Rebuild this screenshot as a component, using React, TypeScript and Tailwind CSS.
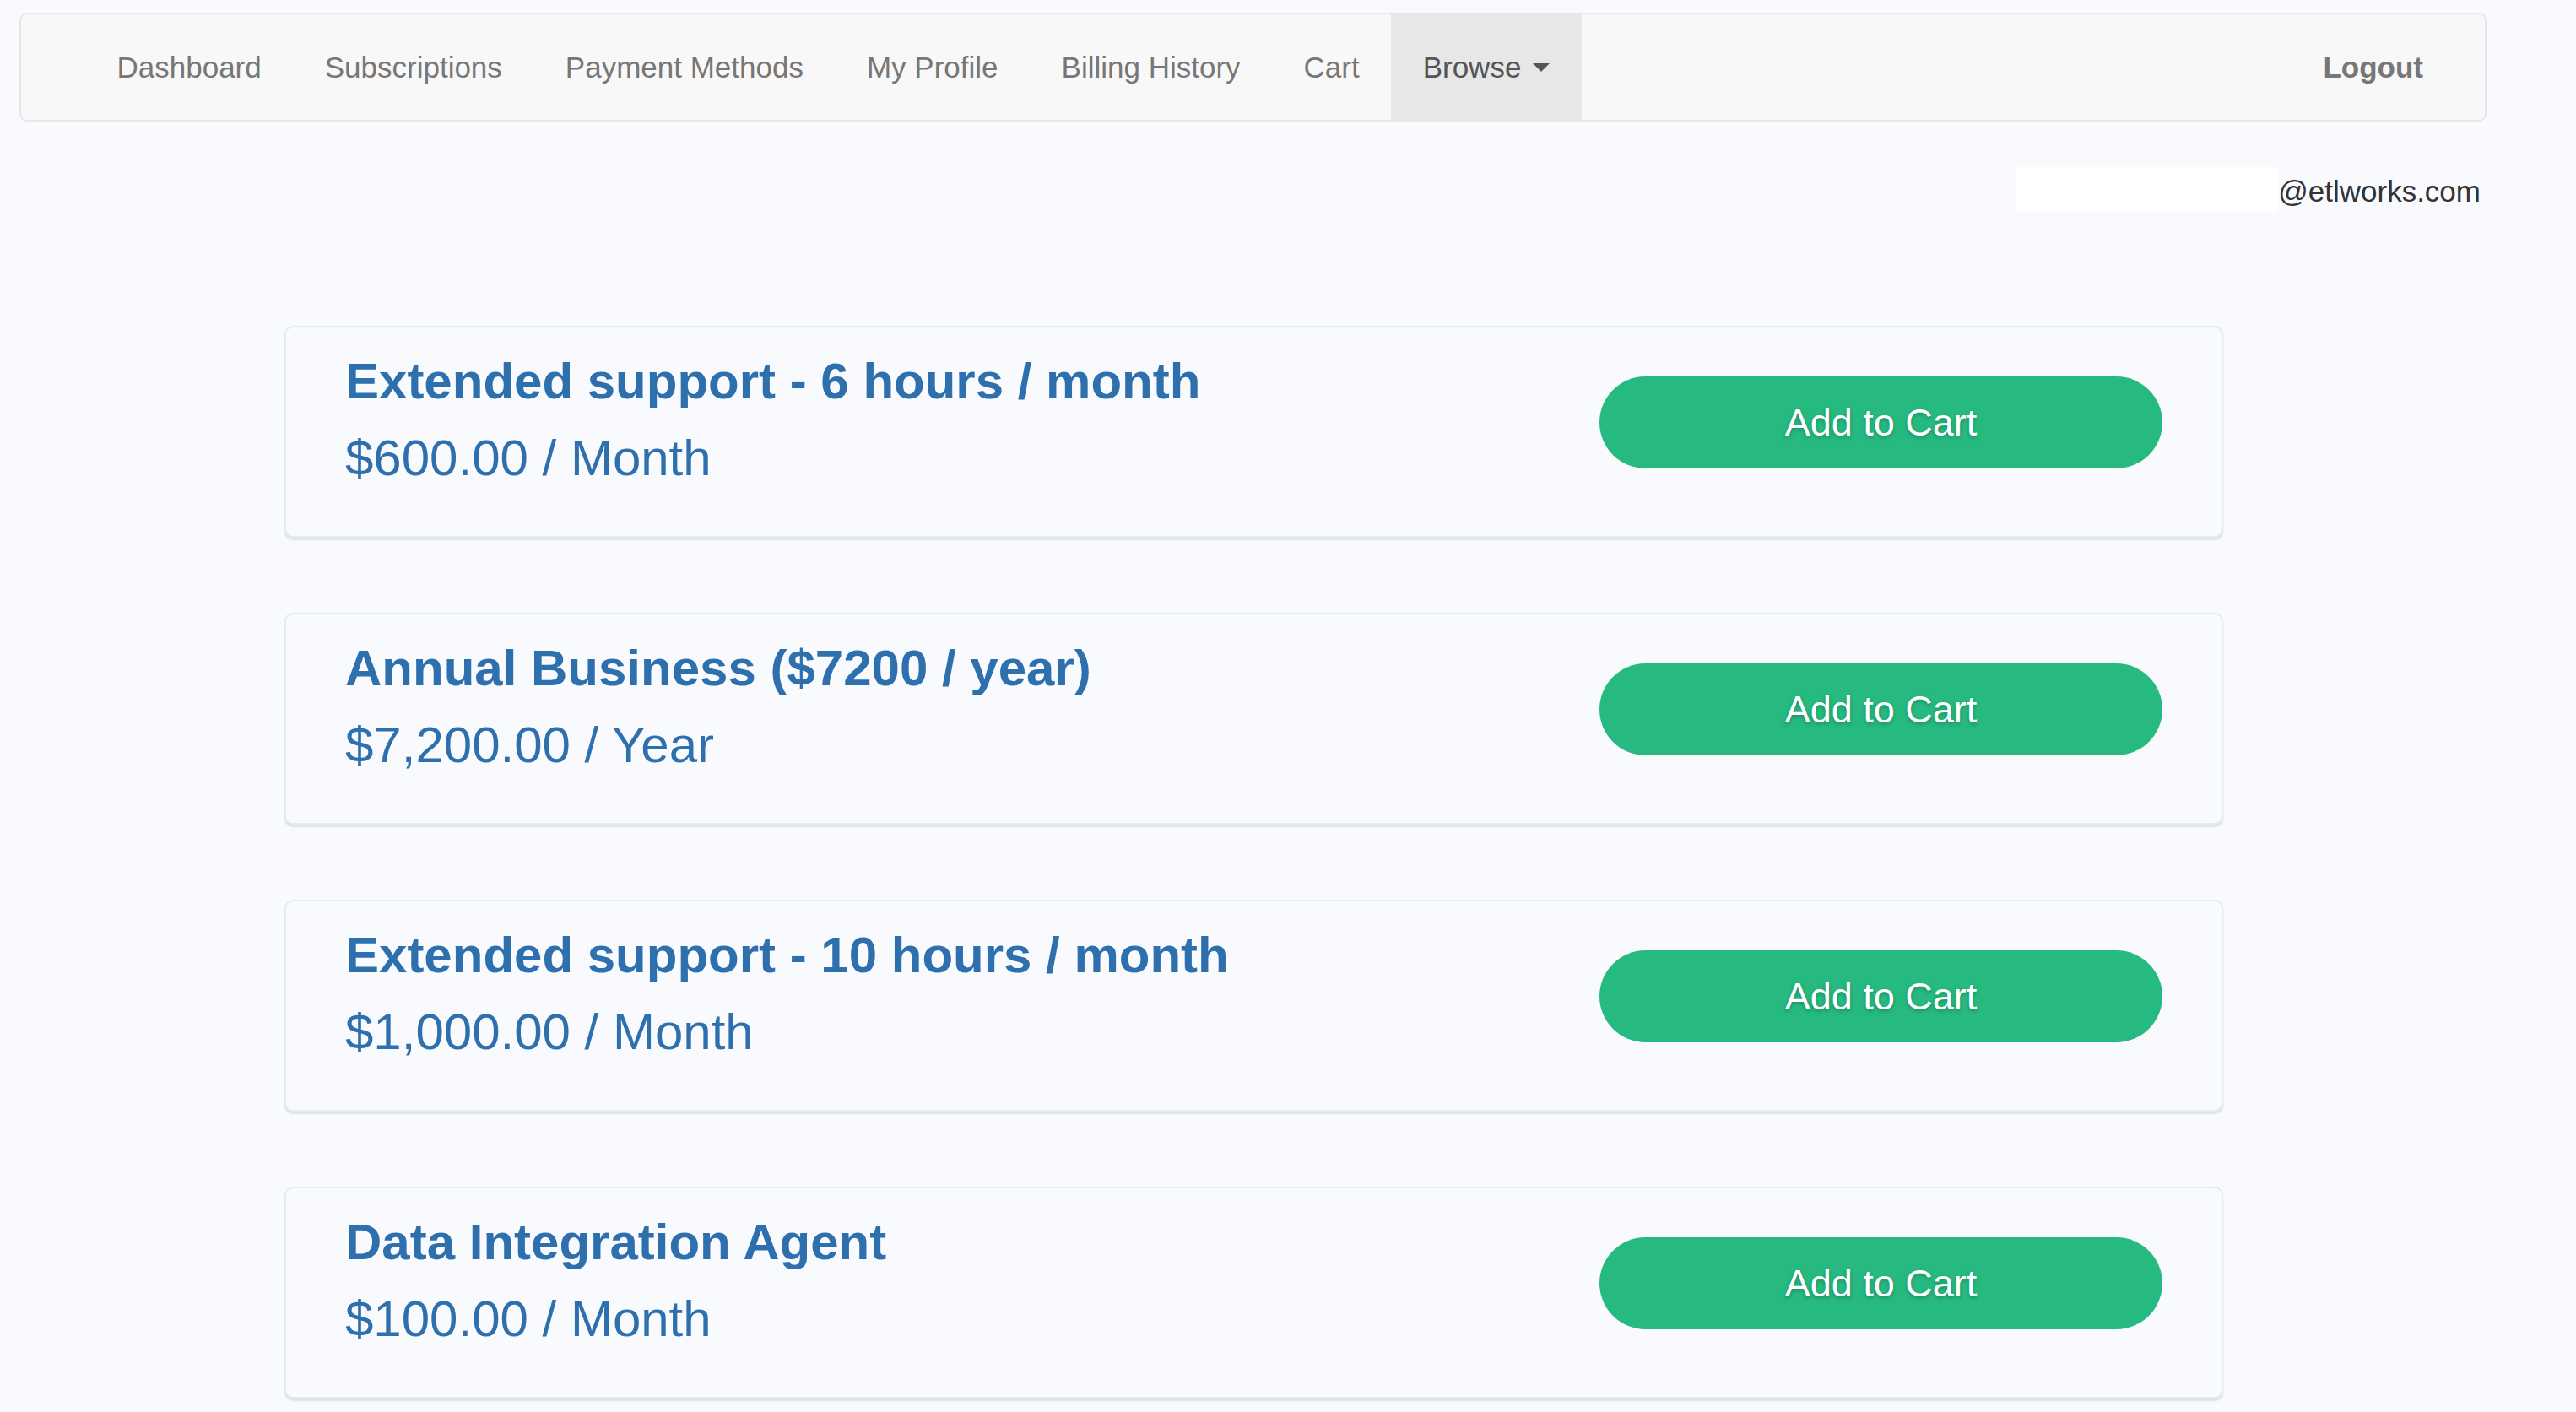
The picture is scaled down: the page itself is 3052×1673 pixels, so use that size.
import React from "react";

const navItems = ["Dashboard", "Subscriptions", "Payment Methods", "My Profile", "Billing History", "Cart"];

const products = [
  { title: "Extended support - 6 hours / month", price: "$600.00 / Month" },
  { title: "Annual Business ($7200 / year)", price: "$7,200.00 / Year" },
  { title: "Extended support - 10 hours / month", price: "$1,000.00 / Month" },
  { title: "Data Integration Agent", price: "$100.00 / Month" },
];

export default function App() {
  return (
    <div
      className="min-h-[1673px] w-full bg-[#f8fafd] pt-[15px]"
      style={{ fontFamily: '"Liberation Sans", Arial, sans-serif' }}
    >
      <div className="ml-[23px] w-[2923px]">
        <nav className="flex h-[129px] items-stretch justify-between rounded-[9px] border-2 border-[#e7e7e7] bg-[#f8f8f8]">
          <ul className="ml-[76px] flex items-stretch">
            {navItems.map((item) => (
              <li key={item} className="flex items-center px-[37.5px] text-[35px] leading-[50px] text-[#777]">
                {item}
              </li>
            ))}
            <li className="flex items-center bg-[#e7e7e7] px-[37.5px] text-[35px] leading-[50px] text-[#555]">
              Browse{" "}
              <span className="ml-[14px] inline-block h-0 w-0 border-l-[10px] border-r-[10px] border-t-[10px] border-l-transparent border-r-transparent border-t-[#555]" />
            </li>
          </ul>
          <div className="mr-[73px] flex items-center text-[35px] font-bold leading-[50px] text-[#777]">
            Logout
          </div>
        </nav>
        <div className="mt-[54px] flex justify-end pr-[7px]">
          <div className="h-[53px] w-[310px] bg-white" />
          <span className="mt-[4px] text-[35px] leading-[50px] text-[#333]">@etlworks.com</span>
        </div>
      </div>

      <div className="ml-[337px] mt-[134px] flex w-[2297px] flex-col gap-[89px]">
        {products.map((p) => (
          <div
            key={p.title}
            className="flex h-[251px] items-start justify-between rounded-[10px] border-2 border-[#e6ebf1] bg-[#f8fafd] px-[70px] shadow-[0_3px_2px_rgba(170,180,195,0.35)]"
          >
            <div className="pt-[31px]">
              <div className="text-[60px] font-bold leading-[66px] text-[#2e6fae]">{p.title}</div>
              <div className="mt-[25px] text-[60px] leading-[66px] text-[#2e6fae]">{p.price}</div>
            </div>
            <button
              className="mt-[58px] flex h-[109px] w-[667px] items-center justify-center rounded-full bg-[#26b980] text-[45px] leading-none text-white [text-shadow:0_2px_4px_rgba(0,0,0,0.25)]"
              style={{ fontFamily: '"Liberation Sans", Arial, sans-serif' }}
            >
              Add to Cart
            </button>
          </div>
        ))}
      </div>
    </div>
  );
}
